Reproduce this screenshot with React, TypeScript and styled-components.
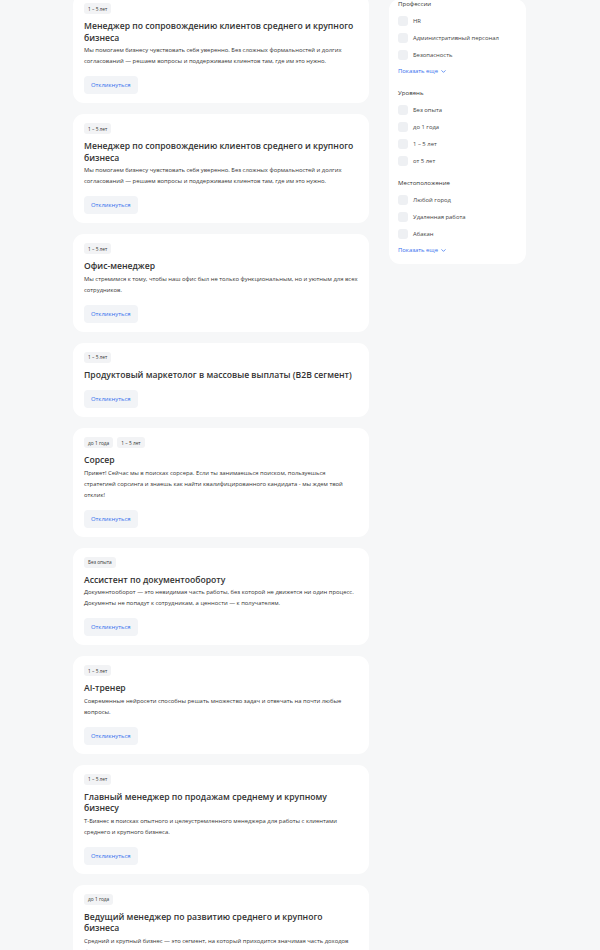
import React from "react";
import styled, { createGlobalStyle } from "styled-components";
import { ChevronDown } from "lucide-react";

const GlobalStyle = createGlobalStyle`
  html, body {
    margin: 0;
    padding: 0;
    background: #f6f7f8;
  }
  body {
    font-family: "Open Sans", Roboto, sans-serif;
    color: #333333;
    overflow: hidden;
  }
`;

type Vacancy = {
  tags: string[];
  title: string;
  text?: string;
};

const vacancies: Vacancy[] = [
  {
    tags: ["1 – 5 лет"],
    title: "Менеджер по сопровождению клиентов среднего и крупного бизнеса",
    text: "Мы помогаем бизнесу чувствовать себя уверенно. Без сложных формальностей и долгих согласований — решаем вопросы и поддерживаем клиентов там, где им это нужно.",
  },
  {
    tags: ["1 – 5 лет"],
    title: "Менеджер по сопровождению клиентов среднего и крупного бизнеса",
    text: "Мы помогаем бизнесу чувствовать себя уверенно. Без сложных формальностей и долгих согласований — решаем вопросы и поддерживаем клиентов там, где им это нужно.",
  },
  {
    tags: ["1 – 5 лет"],
    title: "Офис-менеджер",
    text: "Мы стремимся к тому, чтобы наш офис был не только функциональным, но и уютным для всех сотрудников.",
  },
  {
    tags: ["1 – 5 лет"],
    title: "Продуктовый маркетолог в массовые выплаты (B2B сегмент)",
  },
  {
    tags: ["до 1 года", "1 – 5 лет"],
    title: "Сорсер",
    text: "Привет! Сейчас мы в поисках сорсера. Если ты занимаешься поиском, пользуешься\nстратегией сорсинга и знаешь как найти квалифицированного кандидата - мы ждем твой отклик!",
  },
  {
    tags: ["Без опыта"],
    title: "Ассистент по документообороту",
    text: "Документооборот — это невидимая часть работы, без которой не движется ни один процесс. Документы не попадут к сотрудникам, а ценности — к получателям.",
  },
  {
    tags: ["1 – 5 лет"],
    title: "AI-тренер",
    text: "Современные нейросети способны решать множество задач и отвечать на почти любые вопросы.",
  },
  {
    tags: ["1 – 5 лет"],
    title: "Главный менеджер по продажам среднему и крупному бизнесу",
    text: "Т-Бизнес в поисках опытного и целеустремленного менеджера для работы с клиентами среднего и крупного бизнеса.",
  },
  {
    tags: ["до 1 года"],
    title: "Ведущий менеджер по развитию среднего и крупного бизнеса",
    text: "Средний и крупный бизнес — это сегмент, на который приходится значимая часть доходов банка. Для таких клиентов важен персональный подход: гибкость, понимание отрасли и задач бизнеса.",
  },
];

type FilterGroup = {
  title: string;
  items: string[];
  more?: boolean;
};

const filters: FilterGroup[] = [
  { title: "Профессии", items: ["HR", "Административный персонал", "Безопасность"], more: true },
  { title: "Уровень", items: ["Без опыта", "до 1 года", "1 – 5 лет", "от 5 лет"] },
  { title: "Местоположение", items: ["Любой город", "Удаленная работа", "Абакан"], more: true },
];

export default function App() {
  return (
    <>
      <GlobalStyle />
      <Layout>
        <List>
          {vacancies.map((v, i) => (
            <Card key={i}>
              <Tags>
                {v.tags.map((t) => (
                  <Tag key={t}>{t}</Tag>
                ))}
              </Tags>
              <Title>{v.title}</Title>
              {v.text && <Text>{v.text}</Text>}
              <ApplyButton>Откликнуться</ApplyButton>
            </Card>
          ))}
        </List>
        <Sidebar>
          {filters.map((g) => (
            <Group key={g.title}>
              <GroupTitle>{g.title}</GroupTitle>
              <Options>
                {g.items.map((item) => (
                  <Option key={item}>
                    <Box />
                    <span>{item}</span>
                  </Option>
                ))}
              </Options>
              {g.more && (
                <MoreLink>
                  Показать еще
                  <ChevronDown size={7} strokeWidth={2.5} />
                </MoreLink>
              )}
            </Group>
          ))}
        </Sidebar>
      </Layout>
    </>
  );
}

const Layout = styled.div`
  display: flex;
  align-items: flex-start;
  gap: 20px;
  padding-left: 73px;
  margin-top: -6px;
`;

const List = styled.div`
  width: 296px;
  display: flex;
  flex-direction: column;
  gap: 11px;
`;

const Card = styled.div`
  background: #ffffff;
  border-radius: 11px;
  padding: 9px 10px 9px 11px;
  display: flex;
  flex-direction: column;
  align-items: flex-start;
`;

const Tags = styled.div`
  display: flex;
  gap: 4px;
  margin-bottom: 7px;
`;

const Tag = styled.span`
  display: inline-flex;
  align-items: center;
  height: 11px;
  padding: 0 4px;
  border-radius: 3px;
  background: #f2f3f5;
  font-size: 4.8px;
  color: #333333;
`;

const Title = styled.h3`
  margin: 0;
  font-size: 8.62px;
  line-height: 11.5px;
  font-weight: 600;
  color: #333333;
`;

const Text = styled.p`
  margin: 1px 0 0;
  font-size: 5.88px;
  line-height: 11px;
  color: #333333;
  white-space: pre-line;
`;

const ApplyButton = styled.button`
  margin-top: 9px;
  height: 18px;
  padding: 0 7px;
  border: none;
  border-radius: 4px;
  background: #f2f4f7;
  color: #336fee;
  font-family: inherit;
  font-size: 5.9px;
  cursor: pointer;
`;

const Sidebar = styled.aside`
  width: 137px;
  box-sizing: border-box;
  margin-top: 5px;
  background: #ffffff;
  border-radius: 11px;
  padding: 0 9px 9px;
  display: flex;
  flex-direction: column;
  gap: 12px;
`;

const Group = styled.div`
  display: flex;
  flex-direction: column;
`;

const GroupTitle = styled.div`
  font-size: 6.1px;
  line-height: 10px;
  color: #333333;
`;

const Options = styled.div`
  display: flex;
  flex-direction: column;
  gap: 7px;
  margin-top: 7px;
`;

const Option = styled.label`
  display: flex;
  align-items: center;
  gap: 5px;
  font-size: 5.9px;
  line-height: 10px;
  color: #444444;
`;

const Box = styled.span`
  width: 10px;
  height: 10px;
  border-radius: 3px;
  background: #eef0f3;
  flex-shrink: 0;
`;

const MoreLink = styled.div`
  display: flex;
  align-items: center;
  gap: 2px;
  margin-top: 6px;
  font-size: 5.9px;
  line-height: 10px;
  color: #336fee;
`;
